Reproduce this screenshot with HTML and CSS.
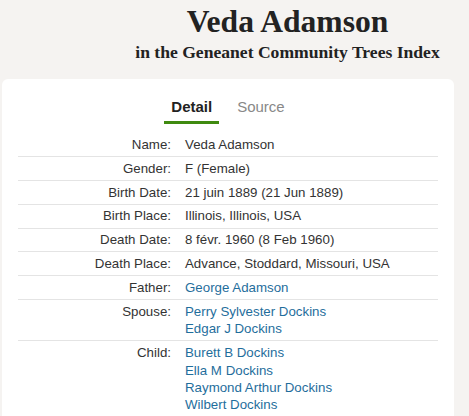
FILE: index.html
```html
<!DOCTYPE html>
<html>
<head>
<meta charset="utf-8">
<link rel="stylesheet" href="styles.css">
</head>
<body>
<header class="head">
  <h1 class="title">Veda Adamson</h1>
  <p class="subtitle">in the Geneanet Community Trees Index</p>
</header>
<main class="card">
  <nav class="tabs">
    <span class="tab active">Detail</span>
    <span class="tab">Source</span>
  </nav>
  <div class="rows">
    <div class="row"><div class="label">Name:</div><div class="value">Veda Adamson</div></div>
    <div class="row"><div class="label">Gender:</div><div class="value">F (Female)</div></div>
    <div class="row"><div class="label">Birth Date:</div><div class="value">21 juin 1889 (21 Jun 1889)</div></div>
    <div class="row"><div class="label">Birth Place:</div><div class="value">Illinois, Illinois, USA</div></div>
    <div class="row"><div class="label">Death Date:</div><div class="value">8 févr. 1960 (8 Feb 1960)</div></div>
    <div class="row"><div class="label">Death Place:</div><div class="value">Advance, Stoddard, Missouri, USA</div></div>
    <div class="row"><div class="label">Father:</div><div class="value"><a class="link">George Adamson</a></div></div>
    <div class="row"><div class="label">Spouse:</div><div class="value"><a class="link">Perry Sylvester Dockins</a><a class="link">Edgar J Dockins</a></div></div>
    <div class="row"><div class="label">Child:</div><div class="value"><a class="link">Burett B Dockins</a><a class="link">Ella M Dockins</a><a class="link">Raymond Arthur Dockins</a><a class="link">Wilbert Dockins</a></div></div>
  </div>
</main>
</body>
</html>
```
FILE: styles.css
```css
html, body {
  margin: 0;
  padding: 0;
  background: #f5f3f1;
}
body {
  font-family: "Liberation Sans", Arial, sans-serif;
  color: #333;
  height: 416px;
  overflow: hidden;
}
.head {
  text-align: center;
  padding-left: 106px;
  padding-top: 3px;
}
.title {
  font-family: "Liberation Serif", "Times New Roman", serif;
  font-weight: bold;
  font-size: 31.6px;
  line-height: 38px;
  margin: 0;
  color: #222;
}
.subtitle {
  font-family: "Liberation Serif", "Times New Roman", serif;
  font-weight: bold;
  font-size: 17.6px;
  line-height: 22px;
  margin: 0;
  color: #222;
}
.card {
  background: #fff;
  margin: 16px 0 0 2px;
  width: 452px;
  border-radius: 6px 6px 0 0;
  padding: 17px 16px 0;
  box-sizing: border-box;
}
.tabs {
  display: flex;
  justify-content: center;
  gap: 11px;
  margin-bottom: 9px;
}
.tab {
  font-size: 15px;
  line-height: 20px;
  padding: 1px 7px 0;
  color: #888;
  border-bottom: 3px solid transparent;
}
.tab.active {
  padding-bottom: 4px;
  color: #222;
  font-weight: bold;
  border-bottom-color: #3f8a10;
}
.row {
  display: grid;
  grid-template-columns: 153px 1fr;
  column-gap: 14px;
  font-size: 13.3px;
  line-height: 17.3px;
  padding: 2.8px 0;
  border-bottom: 1px solid #e4e4e4;
}
.label {
  text-align: right;
}
.value {
  display: flex;
  flex-direction: column;
  align-items: flex-start;
}
.link {
  color: #1f6e9c;
}
```
